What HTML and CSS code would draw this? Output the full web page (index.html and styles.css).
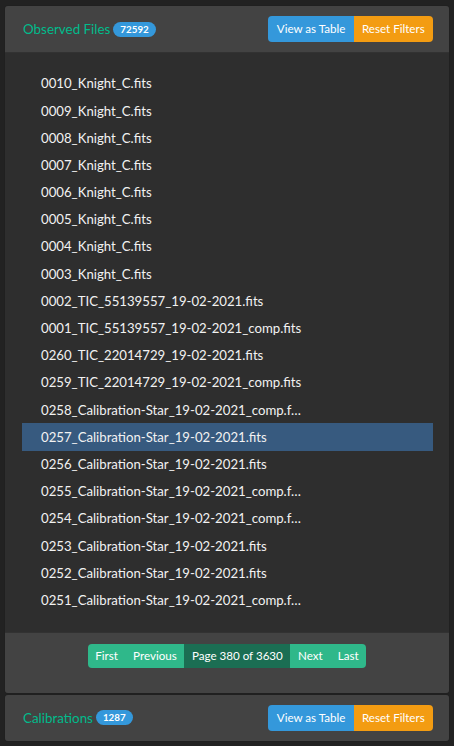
FILE: index.html
```html
<!DOCTYPE html>
<html>
<head>
<meta charset="utf-8">
<link rel="stylesheet" href="styles.css">
</head>
<body>
<div class="page">
  <div class="card">
    <div class="card-header">
      <div class="title">Observed Files <span class="badge">72592</span></div>
      <div class="btn-group">
        <button class="btn btn-info">View as Table</button>
        <button class="btn btn-warning">Reset Filters</button>
      </div>
    </div>
    <div class="card-body">
      <ul class="file-list">
        <li>0010_Knight_C.fits</li>
        <li>0009_Knight_C.fits</li>
        <li>0008_Knight_C.fits</li>
        <li>0007_Knight_C.fits</li>
        <li>0006_Knight_C.fits</li>
        <li>0005_Knight_C.fits</li>
        <li>0004_Knight_C.fits</li>
        <li>0003_Knight_C.fits</li>
        <li>0002_TIC_55139557_19-02-2021.fits</li>
        <li>0001_TIC_55139557_19-02-2021_comp.fits</li>
        <li>0260_TIC_22014729_19-02-2021.fits</li>
        <li>0259_TIC_22014729_19-02-2021_comp.fits</li>
        <li>0258_Calibration-Star_19-02-2021_comp.f…</li>
        <li class="active">0257_Calibration-Star_19-02-2021.fits</li>
        <li>0256_Calibration-Star_19-02-2021.fits</li>
        <li>0255_Calibration-Star_19-02-2021_comp.f…</li>
        <li>0254_Calibration-Star_19-02-2021_comp.f…</li>
        <li>0253_Calibration-Star_19-02-2021.fits</li>
        <li>0252_Calibration-Star_19-02-2021.fits</li>
        <li>0251_Calibration-Star_19-02-2021_comp.f…</li>
      </ul>
    </div>
    <div class="card-footer">
      <ul class="pagination">
        <li class="page-item">First</li>
        <li class="page-item">Previous</li>
        <li class="page-item current">Page 380 of 3630</li>
        <li class="page-item">Next</li>
        <li class="page-item">Last</li>
      </ul>
    </div>
  </div>
  <div class="card">
    <div class="card-header header-only">
      <div class="title">Calibrations <span class="badge">1287</span></div>
      <div class="btn-group">
        <button class="btn btn-info">View as Table</button>
        <button class="btn btn-warning">Reset Filters</button>
      </div>
    </div>
  </div>
</div>
</body>
</html>
```
FILE: styles.css
```css
html, body {
  margin: 0;
  padding: 0;
  background: #222222;
  font-family: Lato, "Open Sans", sans-serif;
  color: #ffffff;
}
.page {
  padding: 5px 4px 0 4px;
}
.card {
  background: #2e2e2e;
  border: 1px solid rgba(0,0,0,0.3);
  border-radius: 4px;
  overflow: hidden;
}
.card-header {
  background: #434343;
  border-bottom: 1px solid rgba(0,0,0,0.25);
  display: flex;
  align-items: center;
  justify-content: space-between;
  padding: 0 16px 0 18px;
  box-sizing: border-box;
  height: 47px;
}
.card-header.header-only {
  height: 46px;
  border-bottom: none;
}
.title {
  color: #00bc8c;
  font-size: 13.4px;
  display: flex;
  align-items: center;
}
.badge {
  background: #3498db;
  color: #fff;
  font-size: 9.8px;
  font-weight: 700;
  border-radius: 8px;
  padding: 1px 7px;
  line-height: 13px;
  margin-left: 3px;
}
.btn-group {
  display: flex;
  border-radius: 4px;
  overflow: hidden;
}
.btn {
  border: none;
  font-family: Lato, "Open Sans", sans-serif;
  font-size: 11.6px;
  color: #fff;
  height: 26px;
  padding: 0 8.3px;
  line-height: 26px;
  margin: 0;
}
.btn-info { background: #3498db; }
.btn-warning { background: #f39c12; }
.card-body {
  padding: 17px 16px 18px 17px;
}
.file-list {
  list-style: none;
  margin: 0;
  padding: 0;
}
.file-list li {
  font-size: 13.2px;
  line-height: 22.5px;
  padding: 2.35px 19px;
  color: #f2f2f2;
  white-space: nowrap;
}
.file-list li.active {
  background: #375a7f;
}
.card-footer {
  background: #434343;
  border-top: 1px solid rgba(0,0,0,0.25);
  padding: 11px 0 25px 0;
  display: flex;
  justify-content: center;
}
.pagination {
  list-style: none;
  margin: 0;
  padding: 0;
  display: flex;
  border-radius: 4px;
  overflow: hidden;
}
.page-item {
  background: #2fb88a;
  color: #fff;
  font-size: 11.6px;
  line-height: 24px;
  height: 24px;
  padding: 0 7.6px;
}
.page-item.current {
  background: #1b6e53;
}
```
